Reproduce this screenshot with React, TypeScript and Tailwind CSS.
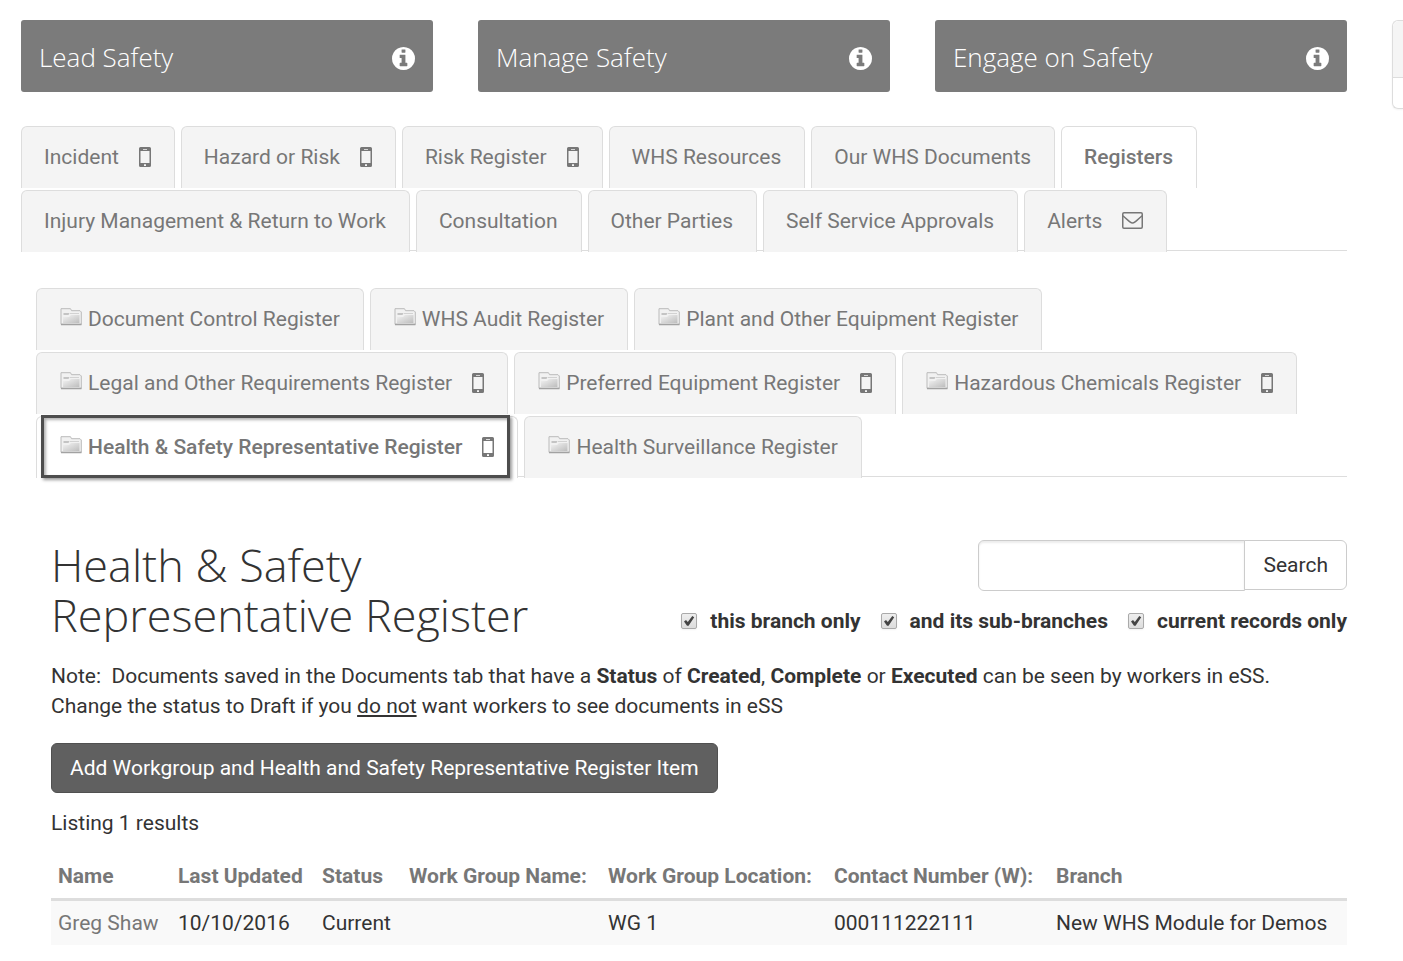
import { useState } from "react";
import type { ReactNode } from "react";

// ============================================================================
// Icons
// ============================================================================

function InfoIcon() {
    return (
        <svg viewBox="128 128 1536 1536" className="size-[23px] fill-white" aria-hidden="true">
            <path d="M1152 1376v-160q0-14-9-23t-23-9h-96v-512q0-14-9-23t-23-9h-320q-14 0-23 9t-9 23v160q0 14 9 23t23 9h96v320h-96q-14 0-23 9t-9 23v160q0 14 9 23t23 9h448q14 0 23-9t9-23zm-128-896v-160q0-14-9-23t-23-9h-192q-14 0-23 9t-9 23v160q0 14 9 23t23 9h192q14 0 23-9t9-23zm640 416q0 209-103 385.5t-279.5 279.5-385.5 103-385.5-103-279.5-279.5-103-385.5 103-385.5 279.5-279.5 385.5-103 385.5 103 279.5 279.5 103 385.5z" />
        </svg>
    );
}

function PhoneIcon() {
    return (
        <svg viewBox="0 0 12 20" className="h-5 w-3 fill-[#777]" aria-hidden="true">
            <path
                fillRule="evenodd"
                d="M1.5 0h9Q12 0 12 1.5v17q0 1.5-1.5 1.5h-9Q0 20 0 18.5v-17Q0 0 1.5 0zM1.5 4v12h9V4zM4 2v.8h4V2zM5 17.2V19h2v-1.8z"
            />
        </svg>
    );
}

function MailIcon() {
    return (
        <svg viewBox="0 0 21 17" className="h-[17px] w-[21px] fill-none stroke-[#777]" strokeWidth="1.5" aria-hidden="true">
            <rect x="0.75" y="0.75" width="19.5" height="15.5" rx="1.2" />
            <path d="M.8 3.8c2.5 2.3 5 4.2 7.5 6.3 1.6 1.3 2.8 1.3 4.4 0 2.5-2.1 5-4 7.5-6.3" />
        </svg>
    );
}

function FolderIcon() {
    return (
        <svg viewBox="0 0 22 18" className="h-[18px] w-[22px]" aria-hidden="true">
            <defs>
                <linearGradient id="folder-fill" x1="0" y1="0" x2="1" y2="1">
                    <stop offset="0" stopColor="#f4f4f4" />
                    <stop offset="1" stopColor="#bdbdbd" />
                </linearGradient>
            </defs>
            <path d="M1 .7h9.5l1 2H20l1.3 1.3v12.3H1z" fill="#f1f1f1" stroke="#bbb" />
            <path d="M3 15V9h6l2-2h8.5v8z" fill="url(#folder-fill)" />
            <path d="M3.5 5h6l-1 2h-5z" fill="#c4c4c4" />
            <path d="M10 5.5h9" stroke="#d2d2d2" />
            <path d="M1 16.5h20.5" stroke="#a2a2a2" strokeWidth="1.5" />
        </svg>
    );
}

// ============================================================================
// Tabs
// ============================================================================

type Tab = {
    label: string;
    icon?: "phone" | "mail";
};

const MAIN_TABS: Tab[] = [
    { label: "Incident", icon: "phone" },
    { label: "Hazard or Risk", icon: "phone" },
    { label: "Risk Register", icon: "phone" },
    { label: "WHS Resources" },
    { label: "Our WHS Documents" },
    { label: "Registers" },
    { label: "Injury Management & Return to Work" },
    { label: "Consultation" },
    { label: "Other Parties" },
    { label: "Self Service Approvals" },
    { label: "Alerts", icon: "mail" },
];

const REGISTER_TABS: Tab[] = [
    { label: "Document Control Register" },
    { label: "WHS Audit Register" },
    { label: "Plant and Other Equipment Register" },
    { label: "Legal and Other Requirements Register", icon: "phone" },
    { label: "Preferred Equipment Register", icon: "phone" },
    { label: "Hazardous Chemicals Register", icon: "phone" },
    { label: "Health & Safety Representative Register", icon: "phone" },
    { label: "Health Surveillance Register" },
];

type TabBarProps = {
    tabs: Tab[];
    active: string;
    folders?: boolean;
    highlight?: boolean;
};

function TabBar({ tabs, active, folders, highlight }: TabBarProps) {
    return (
        <ul className="flex flex-wrap gap-x-1.5 gap-y-1 border-b border-[#ddd]">
            {tabs.map((tab) => {
                const isActive = tab.label === active;
                return (
                    // Tabs hang over the bar's bottom line
                    <li key={tab.label} className="relative -mb-0.5">
                        <a
                            href="#"
                            className={
                                "flex h-[62px] items-center rounded-t-md border border-b-0 border-[#ddd] pr-[23px] pb-0.5 text-[#777] " +
                                (folders ? "pl-[23px] " : "pl-[22px] ") +
                                (isActive ? "bg-white font-medium" : "bg-[#f4f4f4]")
                            }
                        >
                            {folders && (
                                <span className="mr-1.5 mb-1">
                                    <FolderIcon />
                                </span>
                            )}
                            {tab.label}
                            {tab.icon && (
                                <span className="ml-5">{tab.icon === "phone" ? <PhoneIcon /> : <MailIcon />}</span>
                            )}
                        </a>
                        {/* Marker frame around the open register */}
                        {isActive && highlight && (
                            <span className="pointer-events-none absolute -top-px right-2 bottom-0 left-[5px] border-3 border-[#4d4d4d] shadow-[2px_2px_3px_rgba(0,0,0,0.4),inset_2px_2px_3px_rgba(0,0,0,0.3)]" />
                        )}
                    </li>
                );
            })}
        </ul>
    );
}

// ============================================================================
// Search
// ============================================================================

function Filter({ children }: { children: ReactNode }) {
    const [checked, setChecked] = useState(true);
    return (
        <label className="flex items-center gap-[13px]">
            <span className="relative flex">
                <input
                    type="checkbox"
                    checked={checked}
                    onChange={() => setChecked(!checked)}
                    className="size-4 appearance-none rounded-xs border border-[#aaa] bg-linear-to-b from-[#eee] to-[#ddd] shadow-xs"
                />
                {checked && (
                    <svg viewBox="0 0 16 16" className="pointer-events-none absolute inset-0 size-4 fill-[#444]" aria-hidden="true">
                        <path d="M3 8.5l2-1.4L6.8 9 11.3 3l1.9 1.2L7.6 12.8H6z" />
                    </svg>
                )}
            </span>
            {children}
        </label>
    );
}

function SearchForm() {
    return (
        <form className="flex flex-col items-end" onSubmit={(e) => e.preventDefault()}>
            <div className="flex items-start">
                <input
                    type="text"
                    aria-label="Search registers"
                    className="h-[51px] w-[267px] rounded-l-md border border-[#ccc] px-4 shadow-[inset_0_2px_2px_rgba(0,0,0,0.075)]"
                />
                <button type="submit" className="-ml-px h-[50px] rounded-r-md border border-[#ccc] bg-white px-[18px]">
                    Search
                </button>
            </div>
            <div className="mt-[15px] flex flex-wrap gap-x-5 font-bold">
                <Filter>this branch only</Filter>
                <Filter>and its sub-branches</Filter>
                <Filter>current records only</Filter>
            </div>
        </form>
    );
}

// ============================================================================
// Results
// ============================================================================

const COLUMNS = [
    { label: "Name", width: "w-[120px]" },
    { label: "Last Updated", width: "w-36" },
    { label: "Status", width: "w-[87px]" },
    { label: "Work Group Name:", width: "w-[199px]" },
    { label: "Work Group Location:", width: "w-[226px]" },
    { label: "Contact Number (W):", width: "w-[222px]" },
    { label: "Branch", width: "" },
];

function ResultsTable() {
    return (
        <table className="w-full table-fixed text-left whitespace-nowrap">
            <thead>
                <tr className="border-b-3 border-[#ddd] text-[#777]">
                    {COLUMNS.map((column) => (
                        <th key={column.label} className={"px-[7px] pt-2 pb-[7px] font-bold " + column.width}>
                            {column.label}
                        </th>
                    ))}
                </tr>
            </thead>
            <tbody>
                <tr className="bg-[#f9f9f9]">
                    <td className="px-[7px] py-[7px]">
                        <a href="#" className="text-[#777]">
                            Greg Shaw
                        </a>
                    </td>
                    <td className="px-[7px]">10/10/2016</td>
                    <td className="px-[7px]">Current</td>
                    <td className="px-[7px]" />
                    <td className="px-[7px]">WG 1</td>
                    <td className="px-[7px]">000111222111</td>
                    <td className="px-[7px]">New WHS Module for Demos</td>
                </tr>
            </tbody>
        </table>
    );
}

// ============================================================================
// Page
// ============================================================================

export default function App() {
    return (
        <div className="flex items-start gap-[45px] overflow-hidden bg-white pt-5 pl-[21px] font-['Roboto',sans-serif] text-[21px] leading-[30px] text-[#333]">
            <main className="min-w-0 flex-1">
                <div className="grid grid-cols-3 gap-[45px]">
                    {["Lead Safety", "Manage Safety", "Engage on Safety"].map((title) => (
                        <section
                            key={title}
                            className="flex h-[72px] items-center justify-between rounded-[3px] bg-[#7b7b7b] px-[18px] pt-0.5 text-white"
                        >
                            <h2 className="font-['Open_Sans',sans-serif] text-[26px] font-light">{title}</h2>
                            <button type="button" aria-label={"About " + title} className="mt-0.5">
                                <InfoIcon />
                            </button>
                        </section>
                    ))}
                </div>

                <nav className="mt-[34px]">
                    <TabBar tabs={MAIN_TABS} active="Registers" />
                </nav>

                <div className="mt-[37px] pl-[15px]">
                    <TabBar tabs={REGISTER_TABS} active="Health & Safety Representative Register" folders highlight />

                    <div className="mt-[63px] pl-[15px]">
                        <div className="flex items-start justify-between">
                            <h1 className="w-[520px] font-['Open_Sans',sans-serif] text-[45px] leading-[50px] font-light">
                                Health &amp; Safety Representative Register
                            </h1>
                            <SearchForm />
                        </div>

                        <p className="mt-[21px]">
                            Note:&nbsp; Documents saved in the Documents tab that have a <b>Status</b> of <b>Created</b>,{" "}
                            <b>Complete</b> or <b>Executed</b> can be seen by workers in eSS.
                            <br />
                            Change the status to Draft if you <u>do not</u> want workers to see documents in eSS
                        </p>

                        <button
                            type="button"
                            className="mt-[22px] h-[50px] rounded-md border border-[#505050] bg-[#606060] px-[18px] text-white"
                        >
                            Add Workgroup and Health and Safety Representative Register Item
                        </button>

                        <p className="my-[15px]">Listing 1 results</p>

                        <ResultsTable />
                    </div>
                </div>
            </main>

            <aside className="w-[11px] shrink-0 rounded-l-md border border-r-0 border-[#ddd] shadow-xs">
                <div className="h-[57px] rounded-tl-md border-b border-[#ddd] bg-[#f5f5f5]" />
                <div className="h-[30px]" />
            </aside>
        </div>
    );
}
